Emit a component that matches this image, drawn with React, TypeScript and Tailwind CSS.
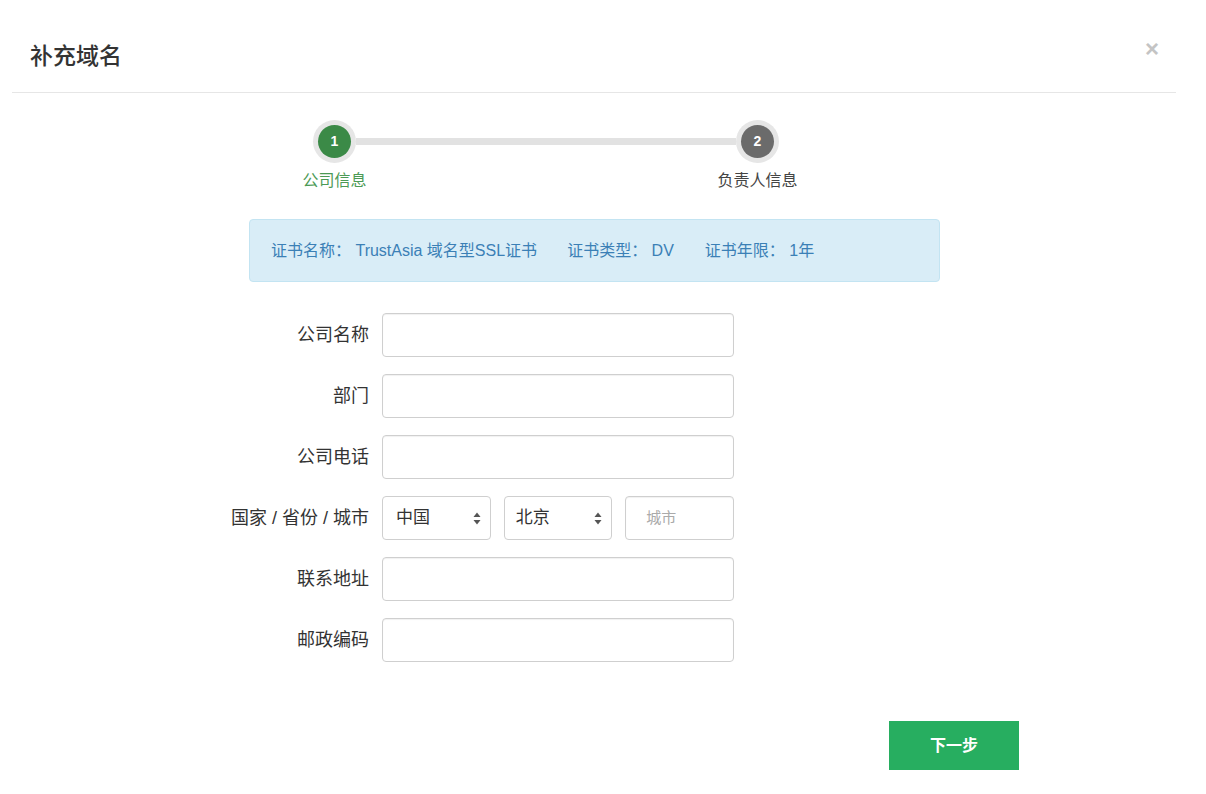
import React from "react";

const fields = ["公司名称", "部门", "公司电话"];
const fieldsAfter = ["联系地址", "邮政编码"];

function SelectArrows() {
  return (
    <svg className="w-[8px] h-[13px] shrink-0" viewBox="0 0 8 13" fill="#555">
      <path d="M4 0.5 L7.5 5 L0.5 5 Z" />
      <path d="M4 12.5 L7.5 8 L0.5 8 Z" />
    </svg>
  );
}

function Row({ label, children }: { label: string; children: React.ReactNode }) {
  return (
    <div className="flex items-center">
      <div className="w-[169px] text-right text-[18px] text-[#333] whitespace-nowrap">{label}</div>
      <div className="ml-[13px] w-[352px]">{children}</div>
    </div>
  );
}

function TextInput({ placeholder }: { placeholder?: string }) {
  return (
    <div className="h-[44px] w-full rounded-[4px] border border-[#cfcfcf] bg-white shadow-[inset_0_1px_1px_rgba(0,0,0,0.06)] flex items-center px-[20px] text-[15px] text-[#aaa]">
      {placeholder}
    </div>
  );
}

export default function App() {
  return (
    <div className="w-[1206px] h-[794px] bg-white font-['Liberation_Sans','Noto_Sans_CJK_SC',sans-serif] overflow-hidden">
      {/* header */}
      <div className="flex justify-between items-start pl-[30px] pr-[47px] pt-[41px] h-[92px]">
        <h1 className="text-[23px] leading-[30px] text-[#333] font-medium">补充域名</h1>
        <span className="mt-[-7px] text-[24px] leading-[30px] font-bold text-[#c4c4c4]">×</span>
      </div>
      <div className="h-px bg-[#e6e6e6] ml-[12px] mr-[30px]" />

      {/* stepper */}
      <div className="ml-[313px] w-[466px] mt-[27px]">
        <div className="flex items-center">
          <div className="w-[43px] h-[43px] rounded-full bg-[#e6e6e6] flex items-center justify-center shrink-0">
            <div className="w-[33px] h-[33px] rounded-full bg-[#3b8a47] flex items-center justify-center text-white text-[14px] font-bold">
              1
            </div>
          </div>
          <div className="flex-1 h-[7px] bg-[#e2e2e2]" />
          <div className="w-[43px] h-[43px] rounded-full bg-[#e6e6e6] flex items-center justify-center shrink-0">
            <div className="w-[33px] h-[33px] rounded-full bg-[#6b6b6b] flex items-center justify-center text-white text-[14px] font-bold">
              2
            </div>
          </div>
        </div>
        <div className="flex justify-between mt-[8px]">
          <div className="w-[43px] flex justify-center">
            <span className="whitespace-nowrap text-[16px] leading-[20px] text-[#4c9a55]">公司信息</span>
          </div>
          <div className="w-[43px] flex justify-center">
            <span className="whitespace-nowrap text-[16px] leading-[20px] text-[#444]">负责人信息</span>
          </div>
        </div>
      </div>

      {/* info alert */}
      <div className="ml-[249px] w-[691px] h-[63px] mt-[28px] rounded-[4px] border border-[#c3e4f2] bg-[#d9edf7] flex items-center pl-[21px] text-[16px] text-[#3b80b6] whitespace-nowrap">
        <span>证书名称： TrustAsia 域名型SSL证书</span>
        <span className="ml-[30px]">证书类型： DV</span>
        <span className="ml-[31px]">证书年限： 1年</span>
      </div>

      {/* form */}
      <div className="ml-[200px] mt-[31px] flex flex-col gap-[17px]">
        {fields.map((f) => (
          <Row key={f} label={f}>
            <TextInput />
          </Row>
        ))}
        <Row label="国家 / 省份 / 城市">
          <div className="grid grid-cols-3 gap-[13px]">
            <div className="h-[44px] rounded-[4px] border border-[#cfcfcf] bg-white flex items-center justify-between pl-[13px] pr-[9px] text-[17px] text-[#333]">
              <span>中国</span>
              <SelectArrows />
            </div>
            <div className="h-[44px] rounded-[4px] border border-[#cfcfcf] bg-white flex items-center justify-between pl-[11px] pr-[9px] text-[17px] text-[#333]">
              <span>北京</span>
              <SelectArrows />
            </div>
            <TextInput placeholder="城市" />
          </div>
        </Row>
        {fieldsAfter.map((f) => (
          <Row key={f} label={f}>
            <TextInput />
          </Row>
        ))}
      </div>

      {/* footer */}
      <div className="flex justify-end pr-[187px] mt-[59px]">
        <button className="w-[130px] h-[49px] bg-[#27ae60] text-white text-[16px] font-bold">下一步</button>
      </div>
    </div>
  );
}
